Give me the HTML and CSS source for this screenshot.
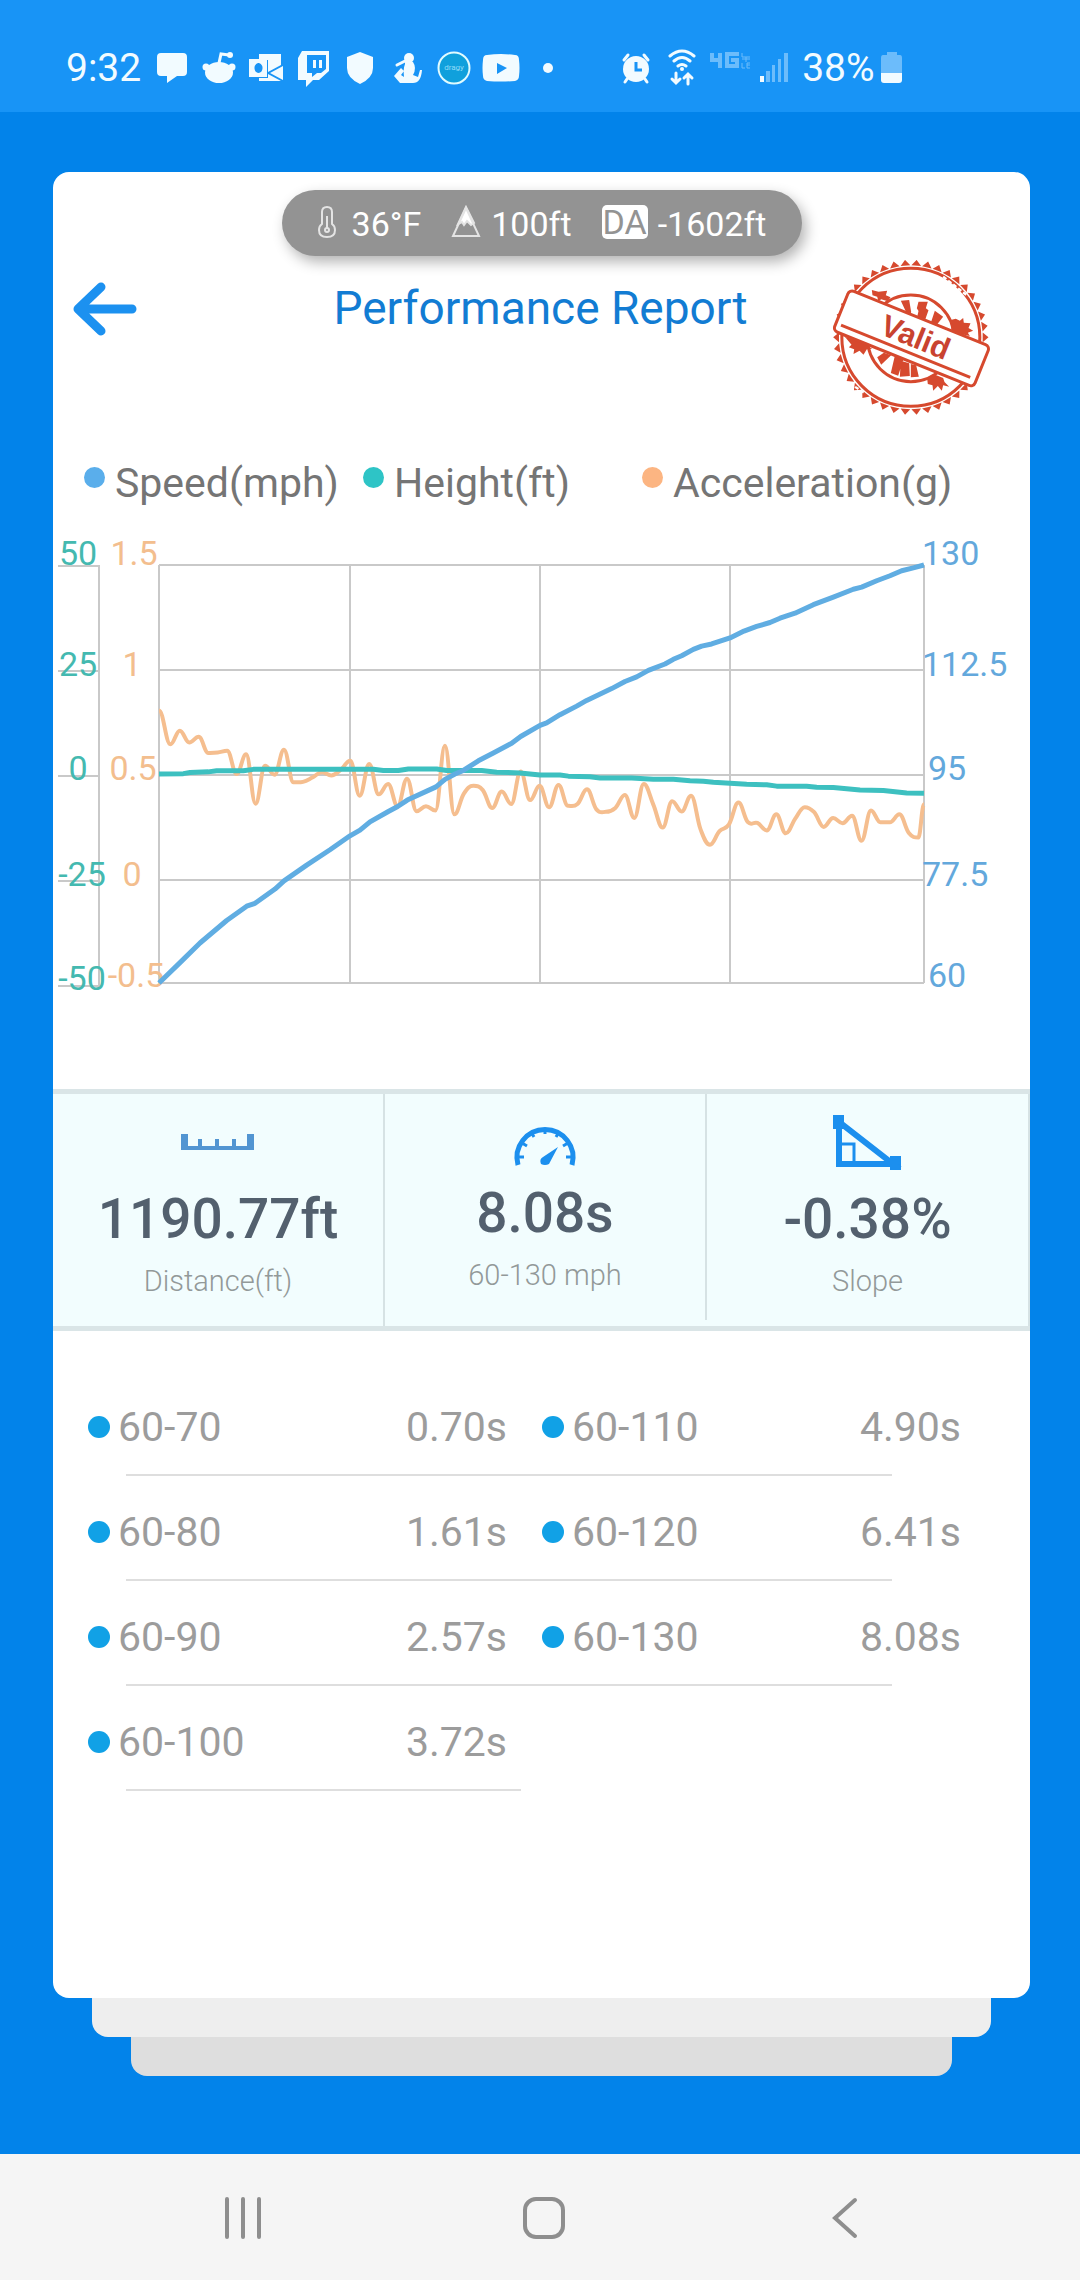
FILE: index.html
```html
<!DOCTYPE html>
<html lang="en">
<head>
    <meta charset="UTF-8">
    <meta name="viewport" content="width=device-width, initial-scale=1.0">
    <title>Performance Report</title>
    <link rel="stylesheet" href="styles.css">
</head>
<body>
    <div class="status-bar">
        <span class="status-text">9:32</span>
        <div class="status-icons">
            <svg class="status-icon" viewBox="0 0 40 40"><path d="M9 5h22q4 0 4 4v15q0 4-4 4h-6l-10 7v-7H9q-4 0-4-4V9q0-4 4-4z"/></svg>
            <svg class="status-icon" viewBox="0 0 40 40"><ellipse cx="20" cy="24.500" rx="14" ry="10.500"/><circle cx="7" cy="19" r="3.500"/><circle cx="33" cy="19" r="3.500"/><circle cx="31" cy="7" r="3"/><path class="line" d="M20 15l2-9 8 1"/></svg>
            <svg class="status-icon" viewBox="0 0 40 40"><path d="M13 6h22v11l-13 7V12h-9zM37 18v14l-13-7zM13 32v-2h9v-4l13 7H13z"/><path fill-rule="evenodd" d="M3 11h18v18H3zM12 15a4 5 0 1 0 1 0z"/></svg>
            <svg class="status-icon" viewBox="0 0 40 40"><path fill-rule="evenodd" d="M9 3h27v20l-10 9h-6l-7 7v-7H5V10zM14 7v18h5v4l5-4h4l5-4V7z"/><path d="M20 12h3v8h-3zM26 12h3v8h-3z"/></svg>
            <svg class="status-icon" viewBox="0 0 40 40"><path d="M20 4l13 5v11q0 10-13 16Q7 30 7 20V9z"/></svg>
            <svg class="status-icon" viewBox="0 0 40 40"><circle cx="22" cy="10" r="5"/><path d="M18 14h8q4 6 0 13l5 2 2-7h2q-1 13-9 13H13l-6-7 7-8 3 3-3 4 3 2q-1-8 1-13z"/><path class="line" d="M10 17l8-4"/></svg>
            <svg class="status-icon" viewBox="0 0 40 40"><circle class="badge-ring" cx="20" cy="20" r="15.500"/><text class="badge-text" x="20" y="22">dragy</text></svg>
            <svg class="status-icon" viewBox="0 0 40 40"><path fill-rule="evenodd" d="M6 7q14-2 28 0 4 0 4 5 1 8 0 16 0 4-4 5-14 1-28 0-4-1-4-5-1-8 0-16 0-5 4-5zM16 15v11l10-6z"/></svg>
            <svg class="status-icon" viewBox="0 0 40 40"><circle cx="20" cy="20" r="5"/></svg>
        </div>
        <div class="status-system">
            <svg class="status-icon" viewBox="0 0 40 40"><circle cx="20" cy="21" r="13"/><path class="line" d="M8 12l4-5M32 12l-4-5M11 31l-2 3M29 31l2 3"/><path class="cut" d="M20 14v8h6"/></svg>
            <svg class="status-icon" viewBox="0 0 40 40"><path class="line" d="M8 8q12-10 24 0M12 13q8-7 16 0M16 18q4-3 8 0"/><circle cx="20" cy="21" r="2"/><path class="line" d="M14 25v9M10 31l4 4 4-4M26 36v-9M22 30l4-4 4 4"/></svg>
            <svg class="network-icon" viewBox="0 0 44 40"><path class="faint-line" d="M4 5v7h10M12 5v15M31 6H19v12h10v-6h-6"/><path class="faint-thin" d="M34 5v4h8M34 11h8M38 9v5M34 15v5h3M39 15v5h3M39 17h3M39 15h3"/></svg>
            <svg class="signal-icon" viewBox="0 0 32 40"><path d="M2 28h4v6H2z"/><path class="faint" d="M8 23h4v11H8zM14 17h3v17h-3zM20 11h3v23h-3zM26 5h4v29h-4z"/></svg>
            <span class="status-text">38%</span>
            <svg class="battery-icon" viewBox="0 0 22 40"><path class="faint" d="M6 4h10v3h3q2 0 2 3v15H0V10q0-3 2-3h4z"/><path d="M0 25h21v7q0 3-3 3H3q-3 0-3-3z"/></svg>
        </div>
    </div>

    <main class="screen">
        <section class="report-card">
            <div class="weather-pill">
                <span class="weather-item">
                    <svg class="thermo-icon" viewBox="0 0 20 34"><path d="M5 19V7q0-5 5-5t5 5v12q3 2 3 6 0 7-8 7t-8-7q0-4 3-6z"/><path d="M10 11v12"/><circle cx="10" cy="25" r="2"/></svg>
                    36°F
                </span>
                <span class="weather-item">
                    <svg class="mountain-icon" viewBox="0 0 30 34"><path class="peak" d="M15 2L7 19l4-2 2 3 3-4 4 4 3-2z"/><path d="M15 3L2 31h26z"/></svg>
                    100ft
                </span>
                <span class="weather-item"><span class="da-badge">DA</span>-1602ft</span>
            </div>

            <header class="report-header">
                <button class="back-button" type="button" aria-label="Back">
                    <svg viewBox="0 0 64 54"><path d="M28 5L5 27l23 22M6 27h53"/></svg>
                </button>
                <h1>Performance Report</h1>
                <svg class="stamp" viewBox="100 60 470 465">
                    <path id="stampTeeth" class="stamp-fill"/>
                    <circle class="stamp-ring" cx="333" cy="292" r="207"/>
                    <circle class="stamp-ring" cx="333" cy="295" r="130"/>
                    <path class="stamp-fill" d="M303 182l25-2 6 36 -6 20zM356 185h28l-6 20 8 6-10 28-24-8 4-18-5-8zM405 212l25 18-22 28-15-10zM232 352l20-14 22 8-30 28zM285 347l26 10-16 50-22-8zM303 362l25 8 2 38-30 2zM333 372l16 4 8 34-24 2z"/>
                    <path class="stamp-fill" d="M216 150l20 5 26-3-4 14 14 6-8 12-20-6-8 6-4-14-14-4zM452 240l16-4 12 6 10-8 2 14 20 2-6 14 14 8-16 6 6 10-18-4-10 8-26-10zM135 290l24 8 16-2 14 10 26 4-12 8 14 8-16 2-10 16-12-12-18 10 2-14-16-6 8-8zM382 416l24-12 24 10 4 12 14 14-18-4-4 16-12-14-14 14-2-16-14-4z"/>
                    <path class="stamp-gap" d="M430 110l70 55M150 430l45 30"/>
                    <g transform="rotate(22 334 295)">
                        <rect class="stamp-banner" x="108" y="229" width="454" height="132" rx="14"/>
                        <path class="stamp-ring" d="M124 337h418"/>
                        <text class="stamp-text" x="345" y="318">Valid</text>
                    </g>
                </svg>
            </header>

            <ul class="legend">
                <li><span class="legend-dot speed"></span>Speed(mph)</li>
                <li><span class="legend-dot height"></span>Height(ft)</li>
                <li><span class="legend-dot accel"></span>Acceleration(g)</li>
            </ul>

            <svg class="chart" viewBox="0 0 977 480">
                <path class="grid-line" d="M106 45h765M106 150h765M106 255h765M106 360h765M106 463h765M106 45v418M297 45v418M487 45v418M677 45v418M871 45v418"/>
                <path class="grid-line" d="M5 46h41M5 151h41M5 256h41M5 361h41M5 466h41M46 45v421"/>
                <g class="height-label">
                    <text x="25" y="45">50</text>
                    <text x="25" y="156">25</text>
                    <text x="25" y="260">0</text>
                    <text x="29" y="366">-25</text>
                    <text x="29" y="470">-50</text>
                </g>
                <g class="accel-label">
                    <text x="81" y="45">1.5</text>
                    <text x="79" y="156">1</text>
                    <text x="80" y="260">0.5</text>
                    <text x="79" y="366">0</text>
                    <text x="83" y="467">-0.5</text>
                </g>
                <g class="speed-label">
                    <text x="869" y="45">130</text>
                    <text x="869" y="156">112.5</text>
                    <text x="875" y="260">95</text>
                    <text x="869" y="366">77.5</text>
                    <text x="875" y="467">60</text>
                </g>
                <svg x="106" y="45" width="765" height="418" viewBox="0 0 2295 1170" preserveAspectRatio="none" overflow="visible">
                    <path id="accelLine" class="accel-line"/>
                    <path id="heightLine" class="height-line"/>
                    <path id="speedLine" class="speed-line"/>
                </svg>
            </svg>

            <div class="stats">
                <div class="stat">
                    <svg class="stat-icon ruler" viewBox="0 0 80 60"><path d="M3 22h7v12h10v-7h4v7h13v-7h4v7h13v-7h4v7h11V22h7v16H3z"/></svg>
                    <strong>1190.77ft</strong>
                    <span>Distance(ft)</span>
                </div>
                <div class="stat stat-middle">
                    <svg class="stat-icon gauge" viewBox="0 0 80 60"><path d="M13 59A28 28 0 1 1 67 59"/><path class="tick" d="M13 51h6M17 37l5 3M26 26l3 5M40 22v6M54 26l-3 5M63 37l-5 3M67 51h-6"/><path class="needle" d="M53 41L44 58q-4 2-8 0-2-5 2-7z"/></svg>
                    <strong>8.08s</strong>
                    <span>60-130 mph</span>
                </div>
                <div class="stat">
                    <svg class="stat-icon slope" viewBox="0 0 80 60"><path class="fill" d="M5 3h11v14H5zM62 44h11v14H62z"/><path d="M11 10v42h54z"/><path class="tick" d="M12 32h14v18"/></svg>
                    <strong>-0.38%</strong>
                    <span>Slope</span>
                </div>
            </div>

            <div class="splits">
                <div class="split-row">
                    <div class="split"><span class="split-dot"></span><span>60-70</span><span class="split-time">0.70s</span></div>
                    <div class="split"><span class="split-dot"></span><span>60-110</span><span class="split-time">4.90s</span></div>
                </div>
                <hr>
                <div class="split-row">
                    <div class="split"><span class="split-dot"></span><span>60-80</span><span class="split-time">1.61s</span></div>
                    <div class="split"><span class="split-dot"></span><span>60-120</span><span class="split-time">6.41s</span></div>
                </div>
                <hr>
                <div class="split-row">
                    <div class="split"><span class="split-dot"></span><span>60-90</span><span class="split-time">2.57s</span></div>
                    <div class="split"><span class="split-dot"></span><span>60-130</span><span class="split-time">8.08s</span></div>
                </div>
                <hr>
                <div class="split-row">
                    <div class="split"><span class="split-dot"></span><span>60-100</span><span class="split-time">3.72s</span></div>
                </div>
                <hr class="half">
            </div>
        </section>
        <div class="stack-card stack-first"></div>
        <div class="stack-card stack-second"></div>
    </main>

    <nav class="nav-bar">
        <button type="button" aria-label="Recent apps"><svg viewBox="0 0 44 44"><path d="M5 3v38M21 3v38M37 3v38"/></svg></button>
        <button type="button" aria-label="Home"><svg viewBox="0 0 44 44"><rect x="3" y="3" width="38" height="38" rx="11"/></svg></button>
        <button type="button" aria-label="Back"><svg viewBox="0 0 44 44"><path d="M33 4L13 22l20 18"/></svg></button>
    </nav>

    <script src="chart.js"></script>
</body>
</html>
```
FILE: styles.css
```css
* {
    box-sizing: border-box;
}
body {
    margin: 0;
    min-height: 100vh;
    display: flex;
    flex-direction: column;
    background-color: #0283ea;
    font-family: Roboto, "Liberation Sans", sans-serif;
}
button {
    border: none;
    padding: 0;
    background: none;
    cursor: pointer;
}
svg {
    display: block;
}

/* status bar */
.status-bar {
    display: flex;
    align-items: center;
    height: 112px;
    padding: 24px 66px 0;
    background-color: #1894f6;
    color: #f2fbff;
    fill: #f2fbff;
}
.status-text {
    font-size: 39px;
    line-height: 48px;
}
.status-icons,
.status-system {
    display: flex;
    align-items: center;
}
.status-icons {
    gap: 7px;
    margin-left: 11px;
}
.status-system {
    gap: 6px;
    margin-left: 48px;
}
.status-icon {
    width: 40px;
    height: 40px;
}
.network-icon {
    width: 44px;
    height: 40px;
}
.signal-icon {
    width: 32px;
    height: 40px;
}
.battery-icon {
    width: 22px;
    height: 40px;
}
.status-system .status-text {
    margin-left: 6px;
}
.status-bar .line {
    fill: none;
    stroke: #f2fbff;
    stroke-width: 3;
    stroke-linecap: round;
}
.status-bar .cut {
    fill: none;
    stroke: #1894f6;
    stroke-width: 3;
}
.status-bar .faint {
    fill: #6cbcfb;
}
.status-bar .faint-line,
.status-bar .faint-thin {
    fill: none;
    stroke: #6cbcfb;
    stroke-width: 4;
}
.status-bar .faint-thin {
    stroke-width: 1;
}
.badge-ring {
    fill: #10a0dc;
    stroke: #e0fbff;
    stroke-width: 2;
}
.badge-text {
    font-size: 8px;
    text-anchor: middle;
    fill: #8fdcf8;
}

/* report card */
.screen {
    flex: 1;
    padding: 60px 50px 78px 53px;
}
.report-card {
    padding: 18px 0 207px;
    border-radius: 16px;
    background-color: #fff;
}
.weather-pill {
    display: flex;
    align-items: center;
    justify-content: center;
    gap: 30px;
    width: 520px;
    height: 66px;
    margin: 0 auto;
    border-radius: 33px;
    background-color: #939393;
    box-shadow: 4px 6px 14px rgba(0, 0, 0, 0.3);
    color: #fff;
    font-size: 34px;
    line-height: 38px;
}
.weather-item {
    display: flex;
    align-items: center;
    gap: 10px;
    padding-top: 2px;
}
.weather-item svg {
    height: 34px;
    margin-bottom: 4px;
    fill: none;
    stroke: #e4e4e4;
    stroke-width: 2;
}
.weather-item .thermo-icon {
    width: 20px;
    margin-right: 5px;
}
.mountain-icon {
    width: 30px;
}
.mountain-icon .peak {
    fill: #fff;
}
.da-badge {
    margin-bottom: 4px;
    border-radius: 5px;
    background-color: #fff;
    color: #939393;
    line-height: 34px;
    padding: 0 1px;
}
.report-header {
    display: grid;
    grid-template-columns: 1fr auto 1fr;
    align-items: start;
    padding: 4px 40px 0 20px;
}
.report-header h1 {
    margin: 0 0 0 18px;
    color: #127cd3;
    font-size: 46px;
    font-weight: 400;
    line-height: 96px;
}
.back-button {
    display: flex;
    align-items: center;
    height: 98px;
}
.back-button svg {
    width: 64px;
    height: 54px;
    fill: none;
    stroke: #1c91f0;
    stroke-width: 9;
    stroke-linecap: round;
    stroke-linejoin: round;
}
.stamp {
    justify-self: end;
    width: 157px;
    height: 155px;
}
.stamp-fill {
    fill: #d6492e;
}
.stamp-ring {
    fill: none;
    stroke: #d6492e;
    stroke-width: 9;
}
.stamp-gap {
    fill: none;
    stroke: #fff;
    stroke-width: 7;
    stroke-dasharray: 12 7;
}
.stamp-banner {
    fill: #fff;
    stroke: #d6492e;
    stroke-width: 9;
}
.stamp-text {
    fill: #c94330;
    font-family: "Liberation Sans", Arial, sans-serif;
    font-size: 92px;
    font-weight: 700;
    text-anchor: middle;
}

/* chart */
.legend {
    display: grid;
    grid-template-columns: 1fr 1fr 388px;
    margin: 0;
    padding: 44px 0 13px 31px;
    list-style: none;
    color: #757575;
    font-size: 41px;
    line-height: 48px;
}
.legend li {
    display: flex;
    gap: 10px;
}
.legend-dot {
    width: 21px;
    height: 21px;
    margin-top: 8px;
    border-radius: 50%;
}
.legend-dot.speed {
    background-color: #5aaeeb;
}
.legend-dot.height {
    background-color: #2ec4c6;
}
.legend-dot.accel {
    background-color: #fcb582;
}
.chart {
    width: 100%;
    margin-bottom: 89px;
    font-size: 34px;
}
.grid-line {
    fill: none;
    stroke: #c9c9c9;
    stroke-width: 2;
}
.accel-line,
.height-line,
.speed-line {
    fill: none;
    stroke-width: 5;
    stroke-linejoin: round;
    vector-effect: non-scaling-stroke;
}
.accel-line {
    stroke: #f5be8f;
    stroke-width: 4;
}
.height-line {
    stroke: #3dc0c0;
}
.speed-line {
    stroke: #60ade2;
}
.height-label,
.accel-label {
    text-anchor: middle;
}
.height-label {
    fill: #44b9b0;
}
.accel-label {
    fill: #f3be8e;
}
.speed-label {
    fill: #63a8dc;
}

/* stats */
.stats {
    display: grid;
    grid-template-columns: 332fr 322fr 323fr;
    align-items: start;
    border-top: 5px solid #dae5e7;
    border-bottom: 5px solid #dae5e7;
    background-color: #f2fdfe;
}
.stat {
    display: flex;
    flex-direction: column;
    align-items: center;
    padding: 18px 0 27px;
    border-right: 2px solid #d6e2e4;
}
.stat-middle {
    padding-top: 12px;
}
.stat strong {
    margin-top: 15px;
    color: #53606e;
    font-size: 55px;
    font-weight: 500;
    line-height: 64px;
}
.stat span {
    margin-top: 12px;
    color: #929999;
    font-size: 29px;
    font-weight: 300;
    line-height: 36px;
}
.stat-icon {
    width: 80px;
    height: 60px;
    fill: none;
    stroke: #1c8fee;
    stroke-width: 5;
}
.stat-icon.ruler {
    fill: #5295d2;
    stroke: none;
}
.stat-icon .tick {
    stroke-width: 3;
}
.gauge .needle,
.slope .fill {
    fill: #1c8fee;
    stroke: none;
}
.stat-icon.slope {
    stroke-width: 6;
}

/* splits */
.splits {
    padding: 40px 69px 0 35px;
    color: #9c9c9c;
    font-size: 41px;
    line-height: 50px;
}
.split-row {
    display: grid;
    grid-template-columns: 1fr 1fr;
    gap: 35px;
    padding: 31px 0 22px;
}
.split {
    display: flex;
    align-items: center;
    gap: 8px;
}
.split-dot {
    width: 22px;
    height: 22px;
    border-radius: 50%;
    background-color: #11a1e6;
}
.split-time {
    margin-left: auto;
}
.splits hr {
    height: 2px;
    margin: 0 69px 0 38px;
    border: none;
    background-color: #dedede;
}
.splits hr.half {
    margin-right: calc(50% + 4px);
}

/* cards underneath */
.stack-card {
    height: 39px;
    border-radius: 0 0 16px 16px;
}
.stack-first {
    margin: 0 39px;
    background-color: #eee;
}
.stack-second {
    margin: 0 78px;
    background-color: #dedede;
}

/* navigation bar */
.nav-bar {
    display: flex;
    justify-content: space-around;
    align-items: center;
    height: 126px;
    padding: 2px 86px 0 94px;
    background-color: #f5f5f5;
}
.nav-bar svg {
    width: 44px;
    height: 44px;
    fill: none;
    stroke: #8e8e8e;
    stroke-width: 4;
    stroke-linecap: round;
}
```
FILE: chart.js
```js
// plot area is 2295 x 1170 units for the full 8.08s run
const PLOT_WIDTH = 2295;
const RUN_TIME = 8.08;

// one sample every 0.1s
const accel = [
    407, 502, 464, 497, 481, 526, 525, 520, 585, 530, 668, 562, 587, 517, 608, 607, 595, 580, 589, 573,
    548, 646, 557, 642, 613, 675, 598, 689, 675, 687, 506, 698, 640, 618, 630, 680, 634, 669, 578, 658,
    618, 678, 616, 674, 669, 628, 684, 691, 680, 644, 708, 613, 670, 735, 661, 690, 646, 740, 783, 745,
    726, 665, 720, 722, 743, 698, 751, 710, 678, 692, 733, 708, 723, 702, 772, 687, 720, 720, 698, 750,
    763
];
const speed = [
    [0, 1170], [63, 1113], [123, 1058], [203, 995], [263, 955], [288, 947], [348, 907], [375, 884],
    [443, 840], [513, 797], [573, 758], [603, 742], [633, 719], [688, 690], [716, 676], [745, 658],
    [831, 621], [858, 600], [888, 585], [913, 575], [958, 548], [1003, 526], [1058, 499], [1085, 480],
    [1143, 449], [1163, 442], [1203, 419], [1253, 395], [1283, 379], [1358, 346], [1398, 326],
    [1433, 313], [1468, 295], [1518, 277], [1543, 264], [1568, 254], [1603, 236], [1628, 227],
    [1658, 221], [1713, 204], [1755, 185], [1793, 172], [1833, 161], [1863, 149], [1908, 135],
    [1963, 111], [2023, 90], [2083, 68], [2108, 62], [2153, 44], [2193, 30], [2228, 16], [2263, 8], [2295, 0]
];
const height = [
    [0, 585], [73, 584], [93, 581], [148, 579], [173, 576], [253, 576], [283, 572], [643, 572],
    [673, 575], [718, 575], [748, 571], [833, 571], [863, 575], [968, 575], [1013, 580], [1083, 582],
    [1143, 588], [1203, 588], [1228, 591], [1293, 593], [1323, 596], [1418, 596], [1483, 600],
    [1543, 600], [1593, 604], [1633, 605], [1663, 608], [1763, 614], [1823, 615], [1853, 619],
    [1943, 619], [1973, 622], [2023, 623], [2103, 630], [2173, 631], [2243, 638], [2295, 639]
];

const linePath = (points) => 'M' + points.map(p => p.join(' ')).join('L');

// flat at every peak and dip, follows the slope in between
const smoothPath = (points) => {
    const slope = points.map((p, i) => {
        const prev = points[i - 1];
        const next = points[i + 1];
        if (!prev || !next || (p[1] - prev[1]) * (next[1] - p[1]) <= 0) return 0;
        return (next[1] - prev[1]) / (next[0] - prev[0]);
    });
    let d = 'M' + points[0].join(' ');
    for (let i = 1; i < points.length; i++) {
        const [x0, y0] = points[i - 1];
        const [x1, y1] = points[i];
        const step = (x1 - x0) * 0.4;
        d += `C${x0 + step} ${y0 + step * slope[i - 1]} ${x1 - step} ${y1 - step * slope[i]} ${x1} ${y1}`;
    }
    return d;
};

const accelPoints = accel.map((y, i) => [i ? (i * 0.1 + 0.02) / RUN_TIME * PLOT_WIDTH : 0, y]);
accelPoints.push([PLOT_WIDTH, 670]);

document.getElementById('accelLine').setAttribute('d', smoothPath(accelPoints));
document.getElementById('heightLine').setAttribute('d', linePath(height));
document.getElementById('speedLine').setAttribute('d', linePath(speed));

// teeth round the edge of the stamp
const teeth = 42;
let teethPath = '';
for (let i = 0; i < teeth; i++) {
    const at = (r, offset) => {
        const a = (i + offset) / teeth * Math.PI * 2;
        return `${333 + r * Math.cos(a)} ${292 + r * Math.sin(a)}`;
    };
    teethPath += `M${at(216, -0.45)}L${at(233, 0)}L${at(216, 0.45)}z`;
}
document.getElementById('stampTeeth').setAttribute('d', teethPath);
```
